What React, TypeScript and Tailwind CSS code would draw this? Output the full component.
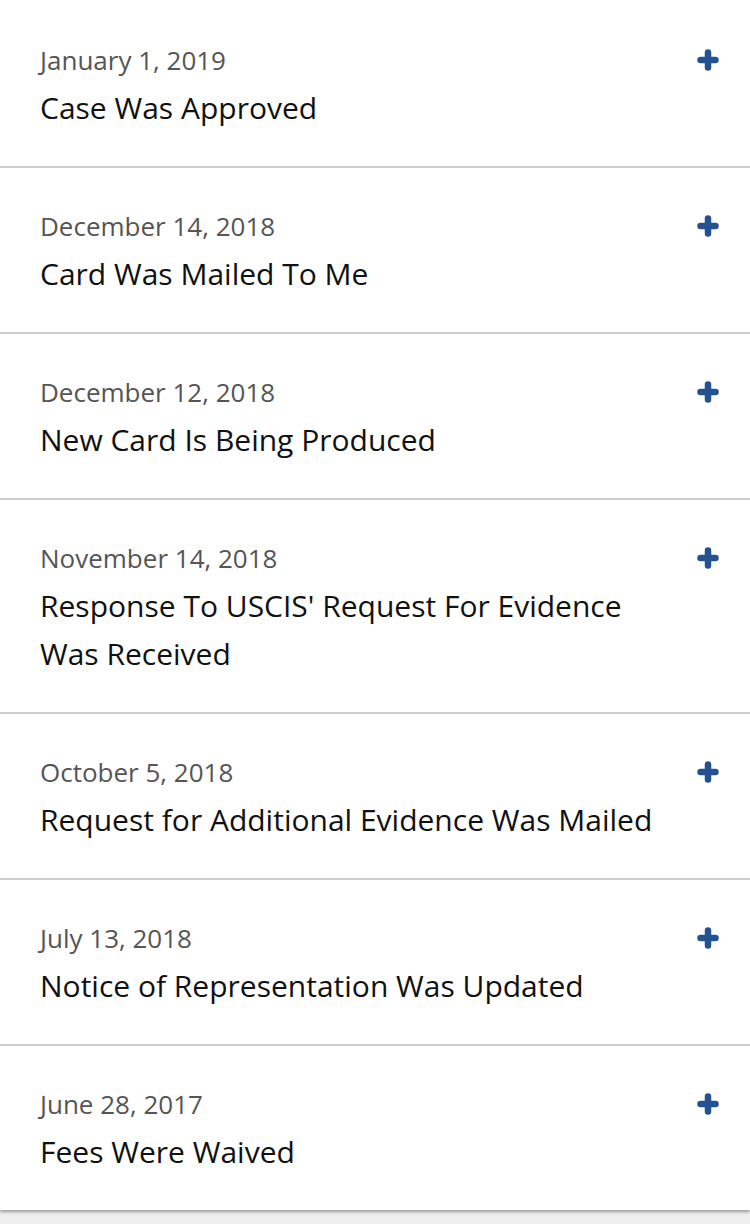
import React from "react";

const events = [
  { date: "January 1, 2019", title: "Case Was Approved" },
  { date: "December 14, 2018", title: "Card Was Mailed To Me" },
  { date: "December 12, 2018", title: "New Card Is Being Produced" },
  { date: "November 14, 2018", title: "Response To USCIS' Request For Evidence Was Received" },
  { date: "October 5, 2018", title: "Request for Additional Evidence Was Mailed" },
  { date: "July 13, 2018", title: "Notice of Representation Was Updated" },
  { date: "June 28, 2017", title: "Fees Were Waived" },
];

const PlusIcon = () => (
  <svg width="22" height="22" viewBox="0 0 22 22" className="shrink-0">
    <path d="M11 3.5v15M3.5 11h15" stroke="#245291" strokeWidth="6.5" strokeLinecap="round" />
  </svg>
);

const App = () => {
  return (
    <main
      className="w-[750px] min-h-[1224px] bg-[#efefef]"
      style={{ fontFamily: "'Open Sans', Lato, sans-serif" }}
    >
      <div className="bg-white pt-[2px] shadow-[0_2px_3px_rgba(0,0,0,0.35)]">
        {events.map((e, i) => (
          <div
            key={i}
            className={`flex justify-between pl-[40px] pr-[31px] pt-[38px] pb-[34px] ${
              i < events.length - 1 ? "border-b-2 border-[#cccccc]" : ""
            }`}
          >
            <div className="flex flex-col pr-[40px]">
              <span className="text-[26px] leading-[40px] text-[#555555]">{e.date}</span>
              <span className="mt-[4px] text-[30px] leading-[48px] text-[#111111]">{e.title}</span>
            </div>
            <div className="h-[40px] flex items-center">
              <PlusIcon />
            </div>
          </div>
        ))}
      </div>
    </main>
  );
};

export default App;
